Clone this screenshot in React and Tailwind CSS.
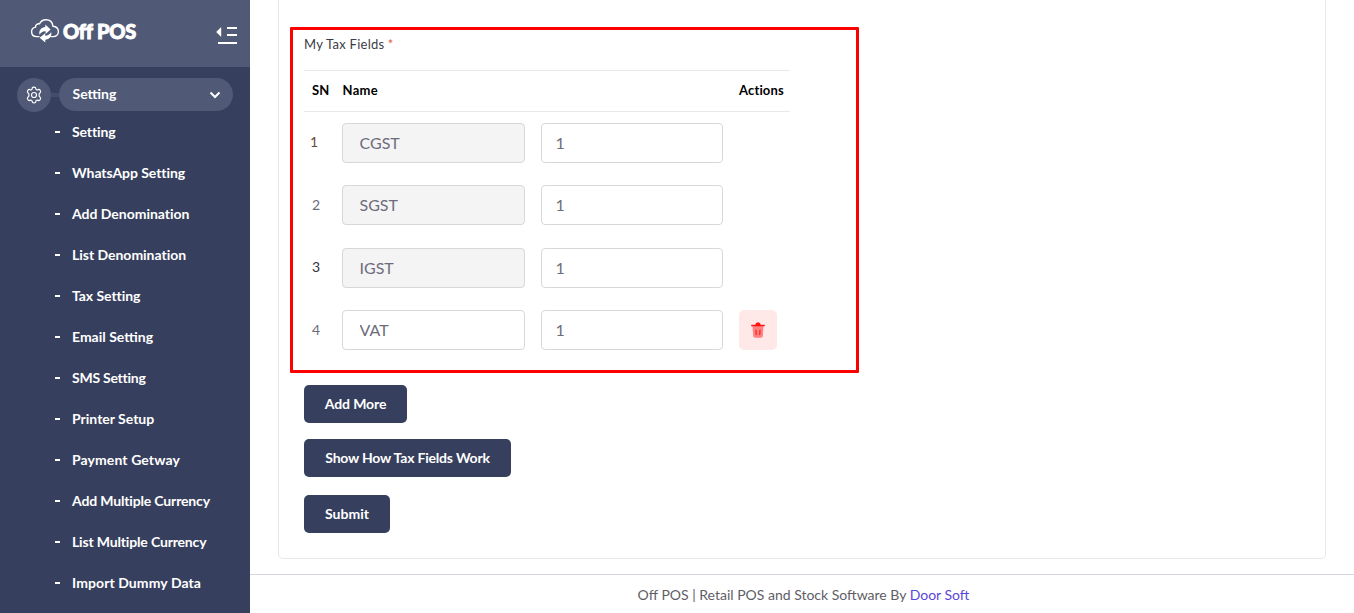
import React from "react";

const menu = [
  ["Setting", "tracking-[-0.1px]"],
  ["WhatsApp Setting", "tracking-[-0.06px]"],
  ["Add Denomination", "tracking-[-0.02px]"],
  ["List Denomination", "tracking-[-0.02px]"],
  ["Tax Setting", "tracking-[-0.05px]"],
  ["Email Setting", "tracking-[0px]"],
  ["SMS Setting", "tracking-[-0.25px]"],
  ["Printer Setup", "tracking-[0px]"],
  ["Payment Getway", "tracking-[0.1px]"],
  ["Add Multiple Currency", "tracking-[-0.16px]"],
  ["List Multiple Currency", "tracking-[-0.16px]"],
  ["Import Dummy Data", "tracking-[0.09px]"],
];

const rows = [
  { sn: "1", name: "CGST", rate: "1", locked: true, color: "text-[#6b4a35] -ml-0.5 -mt-0.5" },
  { sn: "2", name: "SGST", rate: "1", locked: true, color: "text-[#6c6c78]" },
  { sn: "3", name: "IGST", rate: "1", locked: true, color: "text-[#33333b] -mt-0.5" },
  { sn: "4", name: "VAT", rate: "1", locked: false, color: "text-[#6c6c78]" },
];

function CloudLogo() {
  return (
    <svg className="block h-[26px] w-[30px] shrink-0" viewBox="0 0 30 26" fill="none">
      <path
        d="M9 18.6H6.6C3.6 18.6 1.6 16.6 1.6 13.8C1.6 11.3 3.2 9.5 5.5 9.1C5.5 7 7.2 5.4 9.6 5.8C10.8 3.2 13.2 1.8 16 1.8C19.9 1.8 22.5 4.3 22.9 8.2C26.2 8.5 28.4 10.7 28.4 13.6C28.4 16.6 26.2 18.6 23.2 18.6H21"
        stroke="#fff"
        strokeWidth="1.4"
        strokeLinecap="round"
      />
      <path d="M9.4 16.8C8.6 12 11.6 9.2 15.3 9V6.4L20.6 11.4L15.6 15.9V13.2C12.8 13 11.2 14.2 9.4 16.8Z" fill="#fff" />
      <path d="M21.2 14C22.2 18.8 19 21.4 15.3 21.8V24.6L9.6 19.7L15.2 15.2V17.8C17.8 17.8 19.6 16.6 21.2 14Z" fill="#fff" />
    </svg>
  );
}

function CollapseIcon() {
  return (
    <svg className="block h-[20px] w-[22px]" viewBox="0 0 22 20" fill="#fff">
      <path d="M0.2 7L5.2 2V12Z" />
      <rect x="11" y="2" width="10" height="2" />
      <rect x="11" y="9" width="10" height="2" />
      <rect x="2" y="17" width="19" height="2" />
    </svg>
  );
}

function GearIcon() {
  return (
    <svg className="block size-[18px]" viewBox="0 0 18 18" fill="none" stroke="#fff" strokeWidth="1.2" strokeLinejoin="round">
      <path d="M7.2 2.2C7.2 0.7 10.8 0.7 10.8 2.2C10.8 3.8 11.9 4.3 13.3 3.6C14.7 2.8 16.5 5.8 15.1 6.7C13.7 7.5 13.7 10.5 15.1 11.3C16.5 12.2 14.7 15.2 13.3 14.4C11.9 13.7 10.8 14.2 10.8 15.8C10.8 17.3 7.2 17.3 7.2 15.8C7.2 14.2 6.1 13.7 4.7 14.4C3.3 15.2 1.5 12.2 2.9 11.3C4.3 10.5 4.3 7.5 2.9 6.7C1.5 5.8 3.3 2.8 4.7 3.6C6.1 4.3 7.2 3.8 7.2 2.2Z" />
      <circle cx="9" cy="9" r="2.5" />
    </svg>
  );
}

function TrashIcon() {
  return (
    <svg className="block h-4 w-3.5" viewBox="0 0 14 16">
      <path d="M1.5 4H12.5L11.8 14Q11.6 15.7 10 15.7H4Q2.4 15.7 2.2 14Z" fill="#ff8080" />
      <path d="M0.2 2.7H4.2Q4.8 0.2 7 0.2T9.8 2.7H13.8V4.2H0.2Z" fill="#ff1414" />
      <path d="M5 8L5.2 12.4M9 8L8.8 12.4" stroke="#ff1414" strokeWidth="1.1" strokeLinecap="round" />
    </svg>
  );
}

function Sidebar() {
  return (
    <aside className="h-full w-[250px] shrink-0 bg-[#373f5e] text-white">
      <div className="flex h-[67px] items-start justify-between bg-[#505975] pl-[30px] pr-[12px]">
        <div className="flex items-center pt-[18px]">
          <CloudLogo />
          <span className="ml-[3px] whitespace-nowrap text-[20px] font-black leading-[26px] tracking-[-0.25px] [-webkit-text-stroke:0.9px_white]">Off POS</span>
        </div>
        <div className="pt-[25px]">
          <CollapseIcon />
        </div>
      </div>
      <div className="flex items-center pl-[17px] pt-[11px]">
        <div className="flex size-[34px] items-center justify-center rounded-full bg-[#505975]">
          <GearIcon />
        </div>
        <div className="h-1 w-2 bg-[#454d6b]" />
        <div className="-mt-px flex h-[33px] w-[174px] items-center justify-between rounded-full bg-[#505975] pl-[13.5px] pr-[12.5px]">
          <span className="pb-[2px] text-sm font-bold">Setting</span>
          <svg className="h-[8px] w-[12px]" viewBox="0 0 12 8" fill="none" stroke="#fff" strokeWidth="2">
            <path d="M1.5 1.5L6 6L10.5 1.5" />
          </svg>
        </div>
      </div>
      <ul className="-mt-px">
        {menu.map(([label, tracking]) => (
          <li key={label} className="flex h-[41px] items-center pl-[55px]">
            <span className="mr-[12px] h-[2px] w-[5px] bg-white" />
            <span className={"whitespace-nowrap text-sm font-bold " + tracking}>{label}</span>
          </li>
        ))}
      </ul>
    </aside>
  );
}

function Field({ value, locked, className }) {
  return (
    <input
      type="text"
      aria-label="Tax field"
      defaultValue={value}
      readOnly={locked}
      className={
        "h-10 min-w-0 rounded-[4px] border border-[#d8d8dc] pb-[1px] text-base text-[#6e6b7b] outline-none " +
        (locked ? "bg-[#f4f4f4] " : "bg-white ") +
        className
      }
    />
  );
}

function Button({ children, className }) {
  return (
    <button className={"flex h-[38px] items-center justify-center whitespace-nowrap rounded-[5px] bg-[#373f5e] text-sm font-bold text-white " + className}>
      {children}
    </button>
  );
}

export default function App() {
  return (
    <div className="flex h-[613px] w-[1354px] overflow-hidden bg-white font-['Lato',sans-serif]">
      <Sidebar />
      <div className="relative flex min-w-0 flex-1 flex-col">
        <main className="mx-7 h-[559px] rounded-b-[5px] border border-t-0 border-[#e8e8e8] pl-[25px] pt-[34px]">
          <h2 className="h-[20px] text-[13px] leading-[20px] text-[#3c3c46]">
            <span className="tracking-[0.27px]">My Tax Fields</span> <span className="text-[#e0604c]">*</span>
          </h2>
          <div className="mt-[16px] w-[486px]">
            <div className="grid h-[42px] grid-cols-[30px_397px_1fr] items-center border-y border-[#e8e8e8] pl-2 text-[13px] font-bold text-black">
              <span>SN</span>
              <span className="pl-[0.5px] tracking-[0.3px]">Name</span>
              <span className="tracking-[0.15px]">Actions</span>
            </div>
            <div className="flex flex-col gap-[22.33px] pt-[11px]">
              {rows.map((r) => (
                <div key={r.sn} className="grid h-10 grid-cols-[14px_183px_182px_38px] items-center gap-x-4 pl-2">
                  <span className={"text-sm " + r.color}>{r.sn}</span>
                  <Field value={r.name} locked={r.locked} className="px-[16.5px]" />
                  <Field value={r.rate} locked={false} className="px-[13.5px]" />
                  {!r.locked && (
                    <button aria-label="Delete" className="flex h-10 w-[38px] items-center justify-center rounded-[5px] bg-[#ffe8e8]">
                      <TrashIcon />
                    </button>
                  )}
                </div>
              ))}
            </div>
          </div>
          <div className="mt-[35px] flex flex-col items-start">
            <Button className="w-[103px] tracking-[-0.1px]">Add More</Button>
            <Button className="mt-4 w-[207px] tracking-[-0.2px]">Show How Tax Fields Work</Button>
            <Button className="mt-[18px] w-[86px]">Submit</Button>
          </div>
        </main>
        <footer className="mt-[15px] flex flex-1 justify-center border-t border-[#d3d6e2] pl-[3px] pt-[10px] text-sm leading-[20px] text-[#5e5e66]">
          <p className="whitespace-nowrap">
            Off POS | Retail POS and Stock Software By <a className="text-[#5a46dc]">Door Soft</a>
          </p>
        </footer>
        <div className="pointer-events-none absolute left-[40px] top-[27px] h-[346px] w-[569px] rounded-[1px] border-[3px] border-[#ff0000]" />
      </div>
    </div>
  );
}
